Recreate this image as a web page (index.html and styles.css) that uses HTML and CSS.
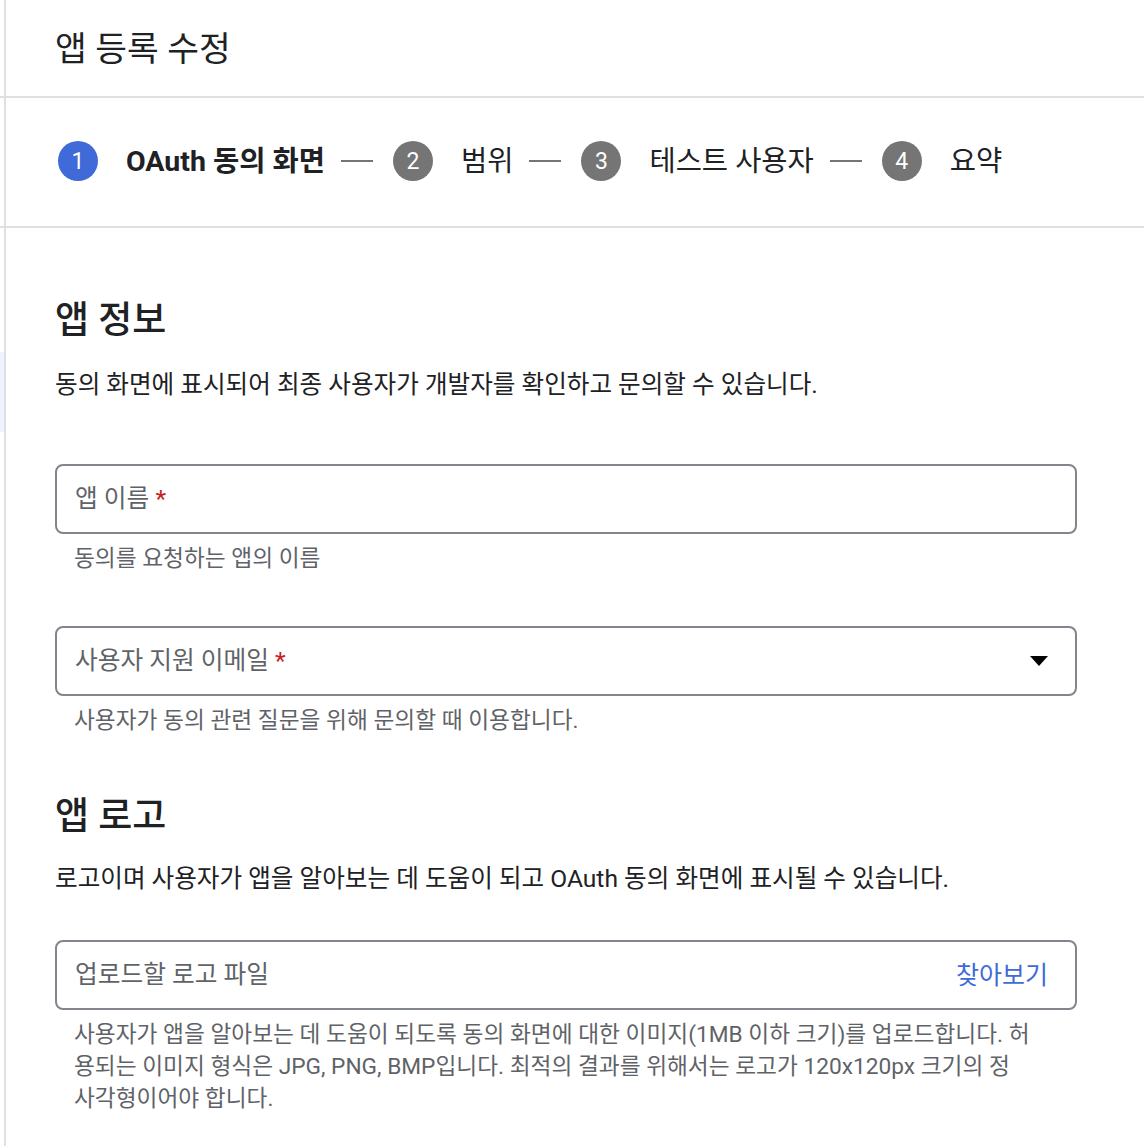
FILE: index.html
```html
<!DOCTYPE html>
<html lang="ko">
<head>
<meta charset="utf-8">
<title>앱 등록 수정</title>
<link rel="stylesheet" href="styles.css">
</head>
<body>
<div class="page">
  <header class="header">
    <h1 class="title">앱 등록 수정</h1>
  </header>
  <nav class="stepper">
    <div class="step active"><span class="num">1</span><span class="label">OAuth 동의 화면</span></div>
    <span class="sep"></span>
    <div class="step"><span class="num">2</span><span class="label">범위</span></div>
    <span class="sep"></span>
    <div class="step"><span class="num">3</span><span class="label">테스트 사용자</span></div>
    <span class="sep"></span>
    <div class="step"><span class="num">4</span><span class="label">요약</span></div>
  </nav>
  <div class="body">
    <div class="rail"><div class="rail-mark"></div></div>
    <main class="content">
      <h2 class="heading">앱 정보</h2>
      <p class="desc">동의 화면에 표시되어 최종 사용자가 개발자를 확인하고 문의할 수 있습니다.</p>

      <div class="field field-first">
        <div class="box"><span class="ph">앱 이름 <span class="req">*</span></span></div>
        <div class="hint">동의를 요청하는 앱의 이름</div>
      </div>

      <div class="field field-second">
        <div class="box"><span class="ph">사용자 지원 이메일 <span class="req">*</span></span><span class="caret"></span></div>
        <div class="hint">사용자가 동의 관련 질문을 위해 문의할 때 이용합니다.</div>
      </div>

      <h2 class="heading heading-logo">앱 로고</h2>
      <p class="desc desc-logo">로고이며 사용자가 앱을 알아보는 데 도움이 되고 OAuth 동의 화면에 표시될 수 있습니다.</p>

      <div class="field field-logo">
        <div class="box"><span class="ph">업로드할 로고 파일</span><span class="browse">찾아보기</span></div>
        <div class="hint hint-multi">사용자가 앱을 알아보는 데 도움이 되도록 동의 화면에 대한 이미지(1MB 이하 크기)를 업로드합니다. 허<br>용되는 이미지 형식은 JPG, PNG, BMP입니다. 최적의 결과를 위해서는 로고가 120x120px 크기의 정<br>사각형이어야 합니다.</div>
      </div>
    </main>
  </div>
</div>
</body>
</html>
```
FILE: styles.css
```css
* { box-sizing: border-box; }
html, body { margin: 0; padding: 0; background: #fff; }
body {
  font-family: Roboto, "Noto Sans CJK KR", sans-serif;
  color: #202124;
}
.page {
  min-height: 1146px;
  background: linear-gradient(to right, #fff 0, #fff 4px, #e0e0e0 4px, #e0e0e0 6px, #fff 6px);
}
.header {
  height: 98px;
  border-bottom: 2px solid #e0e0e0;
  display: flex;
  align-items: center;
  padding-left: 55px;
}
.title {
  margin: 0;
  font-size: 34.5px;
  font-weight: 400;
  line-height: 1.2;
  margin-top: 3px;
}
.stepper {
  height: 130px;
  border-bottom: 2px solid #e0e0e0;
  display: flex;
  align-items: center;
  padding-left: 58px;
  padding-bottom: 2px;
}
.step {
  display: flex;
  align-items: center;
}
.num {
  width: 40px;
  height: 40px;
  border-radius: 50%;
  background: #757575;
  color: #fff;
  font-family: Roboto, sans-serif;
  font-size: 23px;
  display: flex;
  align-items: center;
  justify-content: center;
}
.step.active .num { background: #3f6ad8; }
.label {
  margin-left: 28px;
  font-size: 28.5px;
  line-height: 1.2;
  padding-top: 3px;
}
.step.active .label { font-weight: 700; }
.sep {
  width: 32px;
  height: 2px;
  background: #757575;
  margin: 0 20px 0 16px;
}
.body {
  display: flex;
}
.rail {
  width: 6px;
  flex: none;
}
.rail-mark {
  margin-top: 124px;
  width: 4px;
  height: 80px;
  background: #eef3fd;
}
.content {
  flex: 1;
  padding: 0 67px 40px 49px;
}
.heading {
  margin: 72px 0 0;
  font-size: 37px;
  font-weight: 500;
  line-height: 42px;
}
.desc {
  margin: 27px 0 0;
  font-size: 24.6px;
  line-height: 32px;
}
.heading-logo { margin-top: 61px; }
.desc-logo { margin-top: 25px; }
.field-first { margin-top: 63px; }
.field-second { margin-top: 53px; }
.field-logo { margin-top: 45px; }
.box {
  height: 70px;
  border: 2px solid #80868b;
  border-radius: 8px;
  display: flex;
  align-items: center;
  justify-content: space-between;
  padding: 0 27px 0 18px;
}
.ph {
  font-size: 24.7px;
  color: #5f6368;
  line-height: 1;
}
.req { color: #c5221f; }
.caret {
  width: 0;
  height: 0;
  border-left: 9px solid transparent;
  border-right: 9px solid transparent;
  border-top: 10px solid #000;
}
.browse {
  font-size: 25px;
  color: #3f6ad8;
  line-height: 1;
}
.hint {
  margin-top: 11px;
  padding-left: 19px;
  font-size: 22.7px;
  line-height: 28px;
  color: #5f6368;
}
.hint-multi {
  margin-top: 9px;
  line-height: 32px;
  white-space: nowrap;
}
```
